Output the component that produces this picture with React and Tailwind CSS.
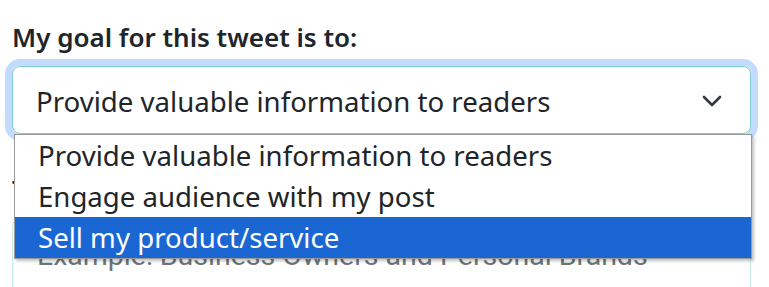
import React from 'react';

const opciones = [
  'Provide valuable information to readers',
  'Engage audience with my post',
  'Sell my product/service',
];

const Chevron = () => (
  <svg width="20" height="12" viewBox="0 0 20 12" fill="none">
    <polyline points="2,2 10,10 18,2" stroke="#343a40" strokeWidth="2.6" strokeLinecap="round" strokeLinejoin="round" />
  </svg>
);

export default function App() {
  const seleccion = 2;
  return (
    <div className="relative w-[769px] h-[287px] overflow-hidden bg-white font-['Noto_Sans',sans-serif] text-[#212529]">
      <div className="pt-[19px] pl-3 w-[751px]">
        <label className="block h-[37px] text-[26px] leading-[37px] font-semibold">
          My goal for this tweet is to:
        </label>
        <div className="mt-[10px] h-[68px] flex items-center justify-between border border-[#7fd0c8] rounded-[8px] shadow-[0_0_0_7px_#c3dbfe] pl-[23px] pr-[28px] pt-[1px]">
          <span className="text-[27.6px] leading-[40px]">{opciones[0]}</span>
          <Chevron />
        </div>
        <label className="block mt-[37px] h-[37px] text-[26px] leading-[37px] font-semibold">
          Target audience:
        </label>
        <div className="mt-[10px] h-[90px] flex items-start border border-[#c4ebe6] rounded-[8px] pl-[24px] pt-[17px]">
          <span className="text-[28.5px] leading-[40px] text-[#6c757d] font-['Roboto',sans-serif]">
            Example: Business Owners and Personal Brands
          </span>
        </div>
      </div>

      <ul className="absolute left-[14px] top-[134px] w-[738px] bg-white border border-[#9a9a9a] shadow-[2px_2px_3px_rgba(0,0,0,0.25)]">
        {opciones.map((op, i) => (
          <li
            key={op}
            className={
              i === seleccion
                ? 'h-[41px] flex items-center pl-[23px] text-[27.6px] bg-[#1a67d4] text-white'
                : 'h-[41px] flex items-center pl-[23px] text-[27.6px] text-[#212529]'
            }
          >
            {op}
          </li>
        ))}
      </ul>
    </div>
  );
}
